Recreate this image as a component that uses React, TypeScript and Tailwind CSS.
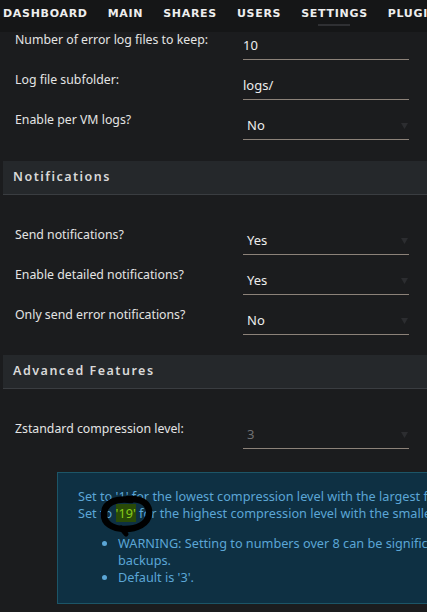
import React from "react";

const sans = "font-['Noto_Sans','Open_Sans',sans-serif]";

const navItems = ["DASHBOARD", "MAIN", "SHARES", "USERS", "SETTINGS", "PLUGINS"];

type Row = { label: string; value: string; kind: "input" | "select"; muted?: boolean };

const logRows: Row[] = [
  { label: "Number of error log files to keep:", value: "10", kind: "input" },
  { label: "Log file subfolder:", value: "logs/", kind: "input" },
  { label: "Enable per VM logs?", value: "No", kind: "select" },
];

const notifyRows: Row[] = [
  { label: "Send notifications?", value: "Yes", kind: "select" },
  { label: "Enable detailed notifications?", value: "Yes", kind: "select" },
  { label: "Only send error notifications?", value: "No", kind: "select" },
];

const advancedRows: Row[] = [
  { label: "Zstandard compression level:", value: "3", kind: "select", muted: true },
];

const SettingRow = ({ row }: { row: Row }) => (
  <div className="flex h-10 pl-[12px]">
    <div className="w-[228px] pt-[11px] text-[12.3px] leading-[18px] text-[#e4e4e4]">{row.label}</div>
    <div className="mt-[14px] flex h-[26px] w-[166px] items-center border-b border-[#8c8279] pb-[1px]">
      <span
        className={`text-[13px] ${row.kind === "select" ? "pl-[4px]" : ""} ${
          row.muted ? "text-[#6f7073]" : "text-[#ededed]"
        }`}
      >
        {row.value}
      </span>
      {row.kind === "select" && (
        <svg className="ml-auto mr-[1px]" width="7" height="6" viewBox="0 0 7 6">
          <path d="M0 0 H7 L3.5 6 Z" fill="#2c2d30" />
        </svg>
      )}
    </div>
  </div>
);

const SectionTitle = ({ title }: { title: string }) => (
  <div className="flex h-[34px] items-center border-b border-[#3a3d41] bg-[#25282b] pl-[10px]">
    <span className="text-[12.5px] font-semibold tracking-[1.5px] text-[#d9d9d9]">{title}</span>
  </div>
);

export default function App() {
  return (
    <div className={`flex h-[612px] w-[427px] flex-col overflow-hidden bg-[#1b1c1e] ${sans}`}>
      <header className="relative z-10 flex h-8 shrink-0 items-start gap-[20px] bg-[#151617] pl-[3px] pt-[7px]">
        {navItems.map((item) => (
          <div key={item} className="flex flex-col items-center">
            <span className="whitespace-nowrap font-['DejaVu_Sans',sans-serif] text-[11px] font-bold leading-[13px] tracking-[0.7px] text-[#eeeeee]">
              {item}
            </span>
            {item === "SETTINGS" && <span className="mt-[4px] h-[2px] w-8 bg-[#2f3033]" />}
          </div>
        ))}
      </header>

      <main className="flex-1 overflow-hidden pl-[3px]">
        <div className="-mt-3">
          {logRows.map((r) => (
            <SettingRow key={r.label} row={r} />
          ))}

          <div className="mt-[21px]">
            <SectionTitle title="Notifications" />
          </div>
          <div className="mt-5">
            {notifyRows.map((r) => (
              <SettingRow key={r.label} row={r} />
            ))}
          </div>

          <div className="mt-5">
            <SectionTitle title="Advanced Features" />
          </div>
          <div className="mt-5">
            {advancedRows.map((r) => (
              <SettingRow key={r.label} row={r} />
            ))}
          </div>

          {/* help text for the compression level */}
          <div className="relative ml-[54px] mt-[23px] w-[600px] border border-[#1c5567] bg-[#0e3043] pb-[17px] pl-[20px] pt-[15px] text-[12.7px] leading-[17px] text-[#5ba6d6]">
            <p className="whitespace-nowrap">
              Set to '1' for the lowest compression level with the largest file sizes.
              <br />
              Set to <span className="bg-[#294a08] text-[#86cc1c]">'19'</span> for the highest compression level with the
              smallest file sizes.
            </p>
            <ul className="mt-[13px] list-disc pl-[40px]">
              <li>
                WARNING: Setting to numbers over 8 can be significantly slower when making
                <br />
                backups.
              </li>
              <li>Default is '3'.</li>
            </ul>
            {/* marker scribble round the '19' */}
            <svg className="pointer-events-none absolute left-[40px] top-[19px]" width="64" height="48" viewBox="0 0 64 48">
              <path
                d="M30 7 C44 6 52 12 51 22 C50 32 39 37 27 37 C14 37 5 31 6 21 C7 11 17 6 33 8"
                fill="none"
                stroke="#000"
                strokeWidth="6.5"
                strokeLinecap="round"
              />
              <path d="M23 36 L28 42" stroke="#000" strokeWidth="5" strokeLinecap="round" />
            </svg>
          </div>
        </div>
      </main>
    </div>
  );
}
